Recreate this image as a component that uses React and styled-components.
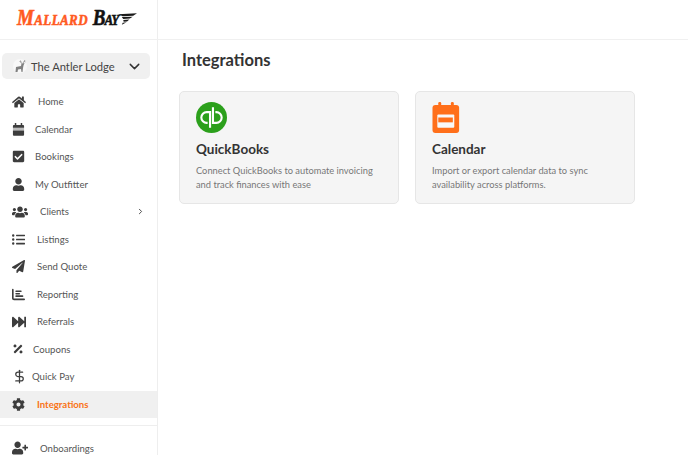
import styled, { createGlobalStyle } from "styled-components";
import {
  FaHome,
  FaCheckSquare,
  FaUser,
  FaUsers,
  FaListUl,
  FaPaperPlane,
  FaFastForward,
  FaPercentage,
  FaCog,
  FaUserPlus,
} from "react-icons/fa";
import { FaChartBar } from "react-icons/fa6";
import { ChevronDown, ChevronRight, DollarSign } from "lucide-react";

const GlobalStyle = createGlobalStyle`
  html, body {
    margin: 0;
    height: 100%;
    overflow: hidden;
    background: #ffffff;
    font-family: "Lato", "Open Sans", sans-serif;
  }
  * {
    box-sizing: border-box;
  }
`;

const CalendarGlyph = ({ size }) => (
  <svg width={size} height={size} viewBox="0 0 14 14" fill="currentColor">
    <rect x="3" y="0" width="1.6" height="3" />
    <rect x="9.4" y="0" width="1.6" height="3" />
    <path d="M1 3.2 a1 1 0 0 1 1 -1 H12 a1 1 0 0 1 1 1 V5 H1 Z" />
    <path d="M1 8 H13 V12.6 a1 1 0 0 1 -1 1 H2 a1 1 0 0 1 -1 -1 Z" />
    <rect x="1" y="5" width="12" height="3" opacity="0.35" />
  </svg>
);

const navItems = [
  { label: "Home", icon: FaHome, slot: 26, size: 14 },
  { label: "Calendar", icon: CalendarGlyph, slot: 23, size: 13 },
  { label: "Bookings", icon: FaCheckSquare, slot: 23, size: 13 },
  { label: "My Outfitter", icon: FaUser, slot: 23, size: 13 },
  { label: "Clients", icon: FaUsers, slot: 28, size: 16, more: true },
  { label: "Listings", icon: FaListUl, slot: 25, size: 13 },
  { label: "Send Quote", icon: FaPaperPlane, slot: 25, size: 13 },
  { label: "Reporting", icon: FaChartBar, slot: 25, size: 13 },
  { label: "Referrals", icon: FaFastForward, slot: 25, size: 14 },
  { label: "Coupons", icon: FaPercentage, slot: 21, size: 12 },
  { label: "Quick Pay", icon: DollarSign, slot: 20, size: 15 },
  { label: "Integrations", icon: FaCog, slot: 25, size: 13, active: true },
];

const App = () => {
  return (
    <Wrapper>
      <GlobalStyle />
      <Sidebar>
        <LogoBar>
          <LogoText>
            <Mallard>Mallard</Mallard> <Bay>Bay</Bay>
          </LogoText>
          <LogoWing viewBox="0 0 40 24">
            <path d="M0 2 L40 0 L32 5 L10 6 Z" fill="#1a1a1a" />
            <path d="M8 8 L31 7 L25 11 L11 12 Z" fill="#1a1a1a" />
            <path d="M11 14 L24 13 L19 17 L12 18 Z" fill="#1a1a1a" />
            <path d="M10 20 L18 19 L8 24 Z" fill="#1a1a1a" />
          </LogoWing>
        </LogoBar>
        <Lodge>
          <LodgeAvatar viewBox="0 0 14 14">
            <circle cx="7" cy="7" r="7" fill="#f8f8f8" />
            <path d="M2.5 13 L3 8 L8 7 L8.5 4.5 L11.5 4 L10.5 6.5 L10 9 L9.5 13 L8.5 13 L8 10 L5 10.5 L4.5 13 Z" fill="#808080" />
            <path d="M8.5 4.5 L7.5 1.5 M10 4 L12 1 M8 3 L6.5 2.5 M11 2.5 L12.5 3" stroke="#808080" strokeWidth="0.7" />
          </LodgeAvatar>
          <LodgeName>The Antler Lodge</LodgeName>
          <ChevronDown size={17} color="#333333" strokeWidth={2} />
        </Lodge>
        <NavList>
          {navItems.map((item) => (
            <NavRow key={item.label} $active={item.active}>
              <IconSlot $width={item.slot}>
                <item.icon size={item.size} />
              </IconSlot>
              <NavLabel $active={item.active}>{item.label}</NavLabel>
              {item.more && <ChevronRight size={9} color="#444444" strokeWidth={2.5} />}
            </NavRow>
          ))}
        </NavList>
        <Divider />
        <NavRow>
          <IconSlot $width={28}>
            <FaUserPlus size={16} />
          </IconSlot>
          <NavLabel>Onboardings</NavLabel>
        </NavRow>
      </Sidebar>
      <Content>
        <TopBar />
        <Main>
          <Heading>Integrations</Heading>
          <Cards>
            <Card>
              <CardIcon viewBox="0 0 32 32">
                <circle cx="16" cy="16" r="16" fill="#2ca01c" />
                <path
                  d="M14.5 26.5 V10.5 H11 a5.5 5.5 0 0 0 0 11 H12"
                  fill="none"
                  stroke="#ffffff"
                  strokeWidth="2.2"
                />
                <path
                  d="M17.5 5.5 V21.5 H21 a5.5 5.5 0 0 0 0 -11 H20"
                  fill="none"
                  stroke="#ffffff"
                  strokeWidth="2.2"
                />
              </CardIcon>
              <CardTitle>QuickBooks</CardTitle>
              <CardText>
                Connect QuickBooks to automate invoicing and track finances with ease
              </CardText>
            </Card>
            <Card>
              <CardIcon viewBox="0 0 32 32">
                <rect x="0.5" y="3" width="27.5" height="29" rx="3" fill="#ff6f1a" />
                <rect x="6.5" y="0" width="3" height="6" rx="1.2" fill="#ff6f1a" />
                <rect x="19.5" y="0" width="3" height="6" rx="1.2" fill="#ff6f1a" />
                <rect x="5.5" y="13" width="17.5" height="13.5" rx="1" fill="#f8f8f8" />
                <rect x="6.5" y="16" width="15" height="5" fill="#ff6f1a" />
              </CardIcon>
              <CardTitle>Calendar</CardTitle>
              <CardText>
                Import or export calendar data to sync availability across platforms.
              </CardText>
            </Card>
          </Cards>
        </Main>
      </Content>
    </Wrapper>
  );
};

const Wrapper = styled.div`
  display: flex;
  height: 100vh;
  overflow: hidden;
`;

const Sidebar = styled.aside`
  width: 158px;
  flex-shrink: 0;
  border-right: 1px solid #eeeeee;
  display: flex;
  flex-direction: column;
  & > * {
    flex-shrink: 0;
  }
`;

const LogoBar = styled.div`
  height: 40px;
  padding: 6px 0 0 17px;
  display: flex;
  align-items: flex-start;
  border-bottom: 1px solid #f0f0f0;
  margin-right: -1px;
`;

const LogoText = styled.div`
  font-family: "Liberation Serif", serif;
  font-style: italic;
  font-weight: 700;
  font-size: 19px;
  line-height: 24px;
  font-variant: small-caps;
  -webkit-text-stroke: 0.5px currentColor;
  white-space: nowrap;
  transform: scaleY(1.2);
`;

const Mallard = styled.span`
  color: #ff5a1f;
  letter-spacing: 0.4px;
`;

const Bay = styled.span`
  color: #111111;
  letter-spacing: -1px;
`;

const LogoWing = styled.svg`
  width: 19px;
  height: 12px;
  margin: 7px 0 0 0;
`;

const Lodge = styled.div`
  margin: 13px 0 0 2px;
  width: 148px;
  height: 26px;
  background: #f0f0f0;
  border-radius: 5px;
  display: flex;
  align-items: center;
  padding: 0 7px 0 11px;
`;

const LodgeAvatar = styled.svg`
  width: 14px;
  height: 14px;
  flex-shrink: 0;
`;

const LodgeName = styled.span`
  flex: 1;
  margin-left: 4px;
  font-size: 11.2px;
  color: #444444;
  white-space: nowrap;
`;

const NavList = styled.nav`
  margin-top: 9px;
  display: flex;
  flex-direction: column;
`;

const NavRow = styled.div`
  height: 27.5px;
  flex-shrink: 0;
  padding: 0 12px;
  display: flex;
  align-items: center;
  background: ${(p) => (p.$active ? "#f0f0f0" : "transparent")};
`;

const IconSlot = styled.span`
  width: ${(p) => p.$width}px;
  flex-shrink: 0;
  display: flex;
  align-items: center;
  color: #3d3d3d;
`;

const NavLabel = styled.span`
  flex: 1;
  font-size: 9.6px;
  font-weight: ${(p) => (p.$active ? 700 : 400)};
  color: ${(p) => (p.$active ? "#f97316" : "#555555")};
  white-space: nowrap;
`;

const Divider = styled.div`
  height: 1px;
  background: #eeeeee;
  margin: 6.5px 0 9px;
`;

const Content = styled.div`
  flex: 1;
  display: flex;
  flex-direction: column;
`;

const TopBar = styled.div`
  height: 40px;
  border-bottom: 1px solid #f0f0f0;
`;

const Main = styled.main`
  padding: 8px 0 0 21px;
`;

const Heading = styled.h1`
  margin: 0 0 18px 3px;
  font-size: 16.5px;
  line-height: 25px;
  font-weight: 700;
  color: #333333;
`;

const Cards = styled.div`
  display: grid;
  grid-template-columns: 220px 220px;
  gap: 16px;
`;

const Card = styled.div`
  height: 113px;
  padding: 10px 16px 0;
  background: #f5f5f5;
  border: 1px solid #e6e6e6;
  border-radius: 5px;
`;

const CardIcon = styled.svg`
  display: block;
  width: 31px;
  height: 31px;
`;

const CardTitle = styled.h2`
  margin: 6px 0 5px;
  font-size: 13.5px;
  line-height: 20px;
  font-weight: 700;
  color: #333333;
`;

const CardText = styled.p`
  margin: 0;
  font-size: 9.3px;
  line-height: 14px;
  color: #777777;
`;

export default App;
